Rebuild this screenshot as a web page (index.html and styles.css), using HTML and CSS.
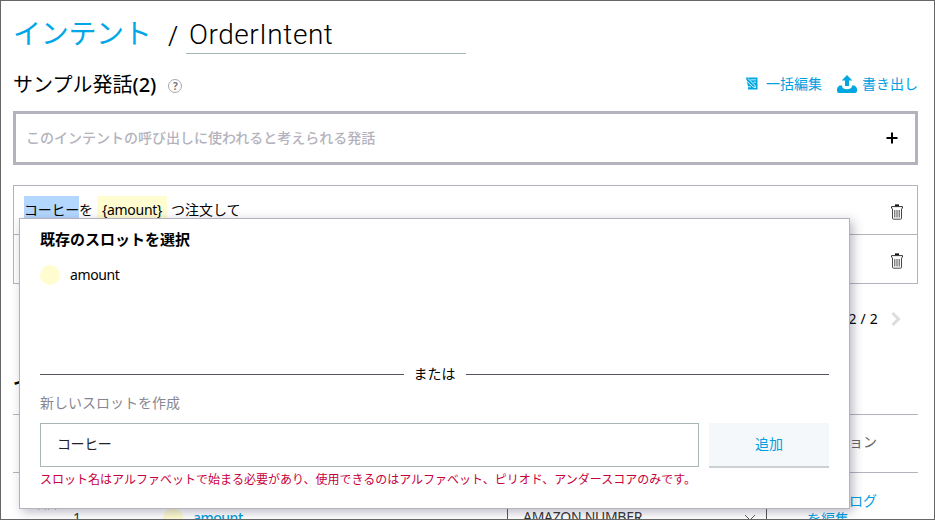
FILE: index.html
```html
<!DOCTYPE html>
<html lang="ja">
<head>
<meta charset="utf-8">
<title>OrderIntent</title>
<link rel="stylesheet" href="styles.css">
</head>
<body>
<svg width="0" height="0" class="sprite">
  <symbol id="trash" viewBox="0 0 12 16">
    <path d="M4 1.300h4" stroke="#111" stroke-width="1.800"/><path d="M.5 4.500V2.600h11v1.900" fill="none" stroke="#333" stroke-width="1"/>
    <path d="M1.500 4.500v9.700q0 1 1 1h7q1 0 1-1V4.500M3.800 6v7.500M6 6v7.500M8.200 6v7.500" fill="none" stroke="#333" stroke-width=".9"/>
  </symbol>
</svg>
<main class="frame">
  <header class="title">
    <a class="crumb">インテント</a><span class="slash">/</span><span class="name">OrderIntent</span>
  </header>

  <div class="subhead">
    <h2>サンプル発話<b>(2)</b></h2><span class="help">?</span>
    <a class="action bulk">
      <svg width="13" height="13" viewBox="0 0 13 13"><path d="M1 .5h11.500v12H3V9.500z" fill="#00a7e1"/><path d="M.5 3l8 7.200 2 .3-.4-2L3 1.500" fill="none" stroke="#fff" stroke-width=".9"/><path d="M5.500 2.800H11M8.500 5.200H11M3 9.800h3" stroke="#fff" stroke-width=".8"/></svg>
      一括編集
    </a>
    <a class="action">
      <svg width="20" height="18" viewBox="0 0 20 18"><path d="M10 0l5.300 5.600H12V11H8V5.600H4.700z" fill="#00a7e1"/><path d="M2.500 10.500H5q0 3.800 5 3.800t5-3.800h2.500q2.500 1.500 2.500 3.500V16q0 2-2 2H2q-2 0-2-2v-2q0-2 2.500-3.500z" fill="#00a7e1"/></svg>
      書き出し
    </a>
  </div>

  <div class="entry">
    <span>このインテントの呼び出しに使われると考えられる発話</span>
    <svg width="12" height="12" viewBox="0 0 12 12"><path d="M6 .5v11M.5 6h11" stroke="#000" stroke-width="2"/></svg>
  </div>

  <div class="list">
    <div class="row"><p><mark class="sel">コーヒー</mark>を<mark class="slot">{amount}</mark>つ注文して</p><svg width="12" height="16"><use href="#trash"/></svg></div>
    <div class="row"><p></p><svg width="12" height="16"><use href="#trash"/></svg></div>
  </div>

  <div class="pager"><span>2 / 2</span><svg width="10" height="14" viewBox="0 0 10 14"><path d="M1.500 1l6 6-6 6" fill="none" stroke="#dddde1" stroke-width="3"/></svg></div>

  <h3 class="slots-title">インテントスロット</h3>
  <div class="table-head">アクション</div>
  <div class="table-row">
    <span class="grip">∧∧</span>
    <span class="order">1</span>
    <i class="dot"></i>
    <a class="slot-name">amount</a>
    <span class="select">AMAZON.NUMBER<svg width="12" height="7" viewBox="0 0 12 7"><path d="M1 1l5 5 5-5" fill="none" stroke="#555"/></svg></span>
    <a class="edit"><span>ダイアログ</span><span>を編集</span></a>
  </div>

  <section class="popup">
    <h4>既存のスロットを選択</h4>
    <div class="option"><i class="dot"></i>amount</div>
    <div class="divider">または</div>
    <label>新しいスロットを作成</label>
    <div class="create"><div class="field">コーヒー</div><div class="add">追加</div></div>
    <p class="error">スロット名はアルファベットで始まる必要があり、使用できるのはアルファベット、ピリオド、アンダースコアのみです。</p>
  </section>
</main>
</body>
</html>
```

FILE: styles.css
```css
* { box-sizing: border-box; }
body { margin: 0; background: #fff; }
h2, h3, h4, p { margin: 0; font-weight: 400; }
svg { display: block; flex: none; }
.sprite { position: absolute; }
.frame {
  position: relative;
  width: 935px;
  height: 520px;
  overflow: hidden;
  border: 1px solid #666;
  padding: 12px 16px 0 12px;
  color: #000;
  font: 14px/20px "Noto Sans", "Noto Sans CJK JP", sans-serif;
}
a { color: #00a0e0; }
.title { display: flex; height: 41px; font-size: 26px; line-height: 40px; }
.crumb { width: 155px; font-size: 28px; line-height: 40px; letter-spacing: -.3px; color: #00a7e8; }
.slash { width: 18px; font-size: 28px; font-weight: 300; line-height: 44px; }
.name {
  width: 280px;
  padding-left: 3px;
  border-bottom: 1px solid #a3b8b4;
  font-family: Roboto, sans-serif;
  font-size: 28px;
  font-weight: 300;
  line-height: 43px;
  letter-spacing: .55px;
}
.subhead { display: flex; align-items: center; height: 57px; padding-top: 4px; }
h2 { font-size: 20px; line-height: 30px; }
h2 b { font-weight: 500; }
.help {
  width: 14px;
  height: 14px;
  margin: 3px auto 0 12px;
  border: 1px solid #aaa;
  border-radius: 50%;
  color: #777;
  font-size: 10px;
  font-weight: 700;
  line-height: 12px;
  text-align: center;
}
.action { display: flex; align-items: center; gap: 5px; margin-top: -2px; }
.bulk { gap: 8px; margin-right: 15px; }
.entry {
  display: flex;
  align-items: center;
  justify-content: space-between;
  height: 54px;
  padding: 0 17px 0 10px;
  border: 3px solid #b4b3bd;
  color: #b4b3bd;
  font-weight: 500;
}
.list { margin-top: 20px; border: 1px solid #b4b3bd; }
.row {
  display: flex;
  justify-content: space-between;
  height: 48px;
  padding: 10px 14px 0 10px;
}
.row svg { margin-top: 8px; }
.row + .row { height: 49px; border-top: 1px solid #b4b3bd; }
.row p { display: flex; line-height: 27px; white-space: nowrap; }
mark { height: 27px; color: #000; }
.sel { width: 55px; background: #b3d7ff; letter-spacing: -.25px; }
.slot { width: 70px; margin: 0 4px; padding-left: 5px; background: #fffccf; letter-spacing: -.3px; }
.pager { display: flex; justify-content: flex-end; align-items: center; gap: 13px; height: 70px; padding-right: 17px; letter-spacing: .2px; }
.slots-title { height: 60px; padding-top: 19px; font-size: 18px; font-weight: 700; }
.table-head {
  height: 59px;
  padding: 17px 41px 0 0;
  border: solid #b4b3bd;
  border-width: 1px 0;
  color: #666;
  text-align: right;
}
.table-row { display: flex; }
.table-row > * { flex: none; margin-top: 35px; }
.grip { width: 60px; padding-left: 24px; font-size: 10px; line-height: 12px; color: #555; }
.table-row .grip { margin-top: 27px; }
.order { width: 90px; color: #333; }
.dot { width: 20px; height: 20px; border-radius: 50%; background: #fffccf; }
.slot-name { width: 324px; padding-left: 10px; font-weight: 500; letter-spacing: -.5px; }
.select {
  display: flex;
  justify-content: space-between;
  align-items: center;
  width: 260px;
  height: 40px;
  padding: 0 10px 2px 15px;
  border: 1px solid #555;
  color: #333;
  letter-spacing: -.3px;
}
.table-row .select { margin-top: 25px; }
.edit { width: 120px; padding-left: 40px; line-height: 18px; }
.table-row .edit { margin-top: 19px; }
.edit span { display: block; white-space: nowrap; }
.popup {
  position: absolute;
  left: 18px;
  top: 217px;
  width: 831px;
  height: 291px;
  padding: 10px 20px;
  border: 1px solid #b4b3bd;
  background: #fff;
  box-shadow: 3px 3px 10px rgba(60, 55, 90, .35);
}
h4 { font-size: 15px; font-weight: 700; line-height: 20px; }
.option { display: flex; gap: 10px; height: 99px; margin-top: 16px; letter-spacing: -.4px; }
.divider { display: flex; align-items: center; gap: 10px; height: 20px; }
.divider::before, .divider::after { content: ""; flex: 1; height: 1px; background: #555560; }
label { display: block; margin: 9px 0 10px; color: #888690; }
.create { display: flex; gap: 10px; }
.field { width: 659px; height: 44px; padding-left: 16px; border: 1px solid #a9b7b8; line-height: 40px; color: #222; letter-spacing: -.4px; }
.add { flex: 1; height: 45px; border-bottom: 2px solid #ccd1d2; background: #f4f8fa; color: #00a0e0; line-height: 42px; text-align: center; }
.error { margin-top: 2px; color: #c7003b; font-size: 12px; white-space: nowrap; }
```
